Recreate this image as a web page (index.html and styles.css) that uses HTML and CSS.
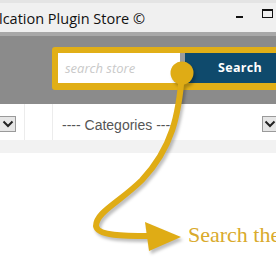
FILE: index.html
```html
<!DOCTYPE html>
<html>
<head>
<meta charset="utf-8">
<link rel="stylesheet" href="styles.css">
</head>
<body>
<div class="page">
  <div class="titlebar">
    <span class="title">lcation Plugin Store ©</span>
    <div class="controls">
      <span class="min"></span>
      <span class="max"></span>
    </div>
  </div>
  <div class="searchbar">
    <div class="frame">
      <div class="input">search store</div>
      <div class="button">Search</div>
    </div>
  </div>
  <div class="filters">
    <div class="cell c1"><span class="selbox"><svg width="12" height="8" viewBox="0 0 12 8"><path d="M1.5 1.5 L6 6 L10.5 1.5" fill="none" stroke="#222" stroke-width="2"/></svg></span></div>
    <div class="cell c2"></div>
    <div class="cell c3">
      <span class="cat">---- Categories ----</span>
      <span class="selbox right"><svg width="12" height="8" viewBox="0 0 12 8"><path d="M1.5 1.5 L6 6 L10.5 1.5" fill="none" stroke="#222" stroke-width="2"/></svg></span>
    </div>
  </div>
  <div class="band"></div>
  <div class="content"></div>

  <svg class="callout" width="276" height="260" viewBox="0 0 276 260">
    <g class="shadowed">
      <path d="M182 73 C 179 115, 172 148, 142 180 C 120 202, 96 212, 96 226 C 97 236, 125 236, 150 236" fill="none" stroke="#dfac15" stroke-width="6" stroke-linecap="round"/>
      <polygon points="145,222 181,237 149,251" fill="#dfac15"/>
      <circle cx="182" cy="73" r="11.5" fill="#dfac15"/>
    </g>
  </svg>
  <div class="note">Search the store</div>
</div>
</body>
</html>
```
FILE: styles.css
```css
html, body {
  margin: 0;
  padding: 0;
  background: #ffffff;
}
.page {
  position: relative;
  width: 276px;
  height: 260px;
  overflow: hidden;
  background: #ffffff;
}
.titlebar {
  height: 29px;
  border-top: 3px solid #e4e4e4;
  border-bottom: 4px solid #a8a8a8;
  background: #f0f0f0;
  display: flex;
  align-items: center;
  justify-content: space-between;
}
.title {
  font-family: "Open Sans", sans-serif;
  font-size: 14.5px;
  color: #111;
  margin-left: -1px;
  white-space: nowrap;
  margin-top: 2px;
}
.controls {
  display: flex;
  align-items: center;
  gap: 19px;
  margin-right: 3px;
  margin-top: -8px;
}
.min {
  width: 7px;
  height: 2px;
  background: #111;
  margin-top: 6px;
}
.max {
  width: 9px;
  height: 6px;
  border: 1px solid #111;
  border-top-width: 2px;
}
.searchbar {
  background: #8b8b8b;
  height: 57px;
  padding-top: 11px;
  padding-left: 52px;
  overflow: hidden;
}
.frame {
  display: flex;
  width: 260px;
  padding: 6px 0 7px 6px;
  background: #e1af17;
  border-radius: 3px;
}
.input {
  height: 30px;
  background: #ffffff;
  border-right: 5px solid #9c9c9c;
  box-sizing: border-box;
  width: 127px;
  padding-left: 7px;
  font-family: "Open Sans", sans-serif;
  font-style: italic;
  font-size: 13px;
  line-height: 30px;
  color: #c9c9c9;
}
.button {
  width: 110px;
  height: 30px;
  background: #0f4a6c;
  color: #ffffff;
  font-family: "Open Sans", sans-serif;
  font-weight: bold;
  font-size: 12.5px;
  line-height: 30px;
  text-align: center;
  letter-spacing: 0.3px;
}
.filters {
  display: flex;
  height: 36px;
  background: #ffffff;
}
.cell {
  height: 36px;
  box-sizing: border-box;
  display: flex;
  align-items: center;
}
.c1 {
  width: 25px;
  border-right: 1px solid #ececec;
}
.c2 {
  width: 28px;
  border-right: 1px solid #ececec;
}
.c3 {
  flex: 1;
  padding-left: 9px;
  justify-content: space-between;
}
.selbox {
  width: 16px;
  height: 16px;
  box-sizing: border-box;
  background: #e6e6e6;
  border: 1px solid #9a9a9a;
  display: flex;
  align-items: center;
  justify-content: center;
  margin-top: 4px;
}
.c1 .selbox {
  border-left: none;
  width: 16px;
  justify-content: flex-end;
  padding-right: 1px;
}
.selbox.right {
  width: 14px;
  border-right: none;
  justify-content: flex-start;
  padding-left: 1px;
}
.cat {
  font-family: "Liberation Sans", sans-serif;
  font-size: 14px;
  color: #555555;
  white-space: nowrap;
  margin-top: 5px;
}
.band {
  height: 13px;
  background: #f2f2f2;
}
.content {
  height: 120px;
  background: #ffffff;
}
.callout {
  position: absolute;
  left: 0;
  top: 0;
}
.shadowed {
  filter: drop-shadow(2px 3px 1.5px rgba(0, 0, 0, 0.25));
}
.note {
  position: absolute;
  left: 188px;
  top: 222px;
  font-family: "Liberation Serif", serif;
  font-size: 22px;
  color: #d9aa2c;
  white-space: nowrap;
}
```
